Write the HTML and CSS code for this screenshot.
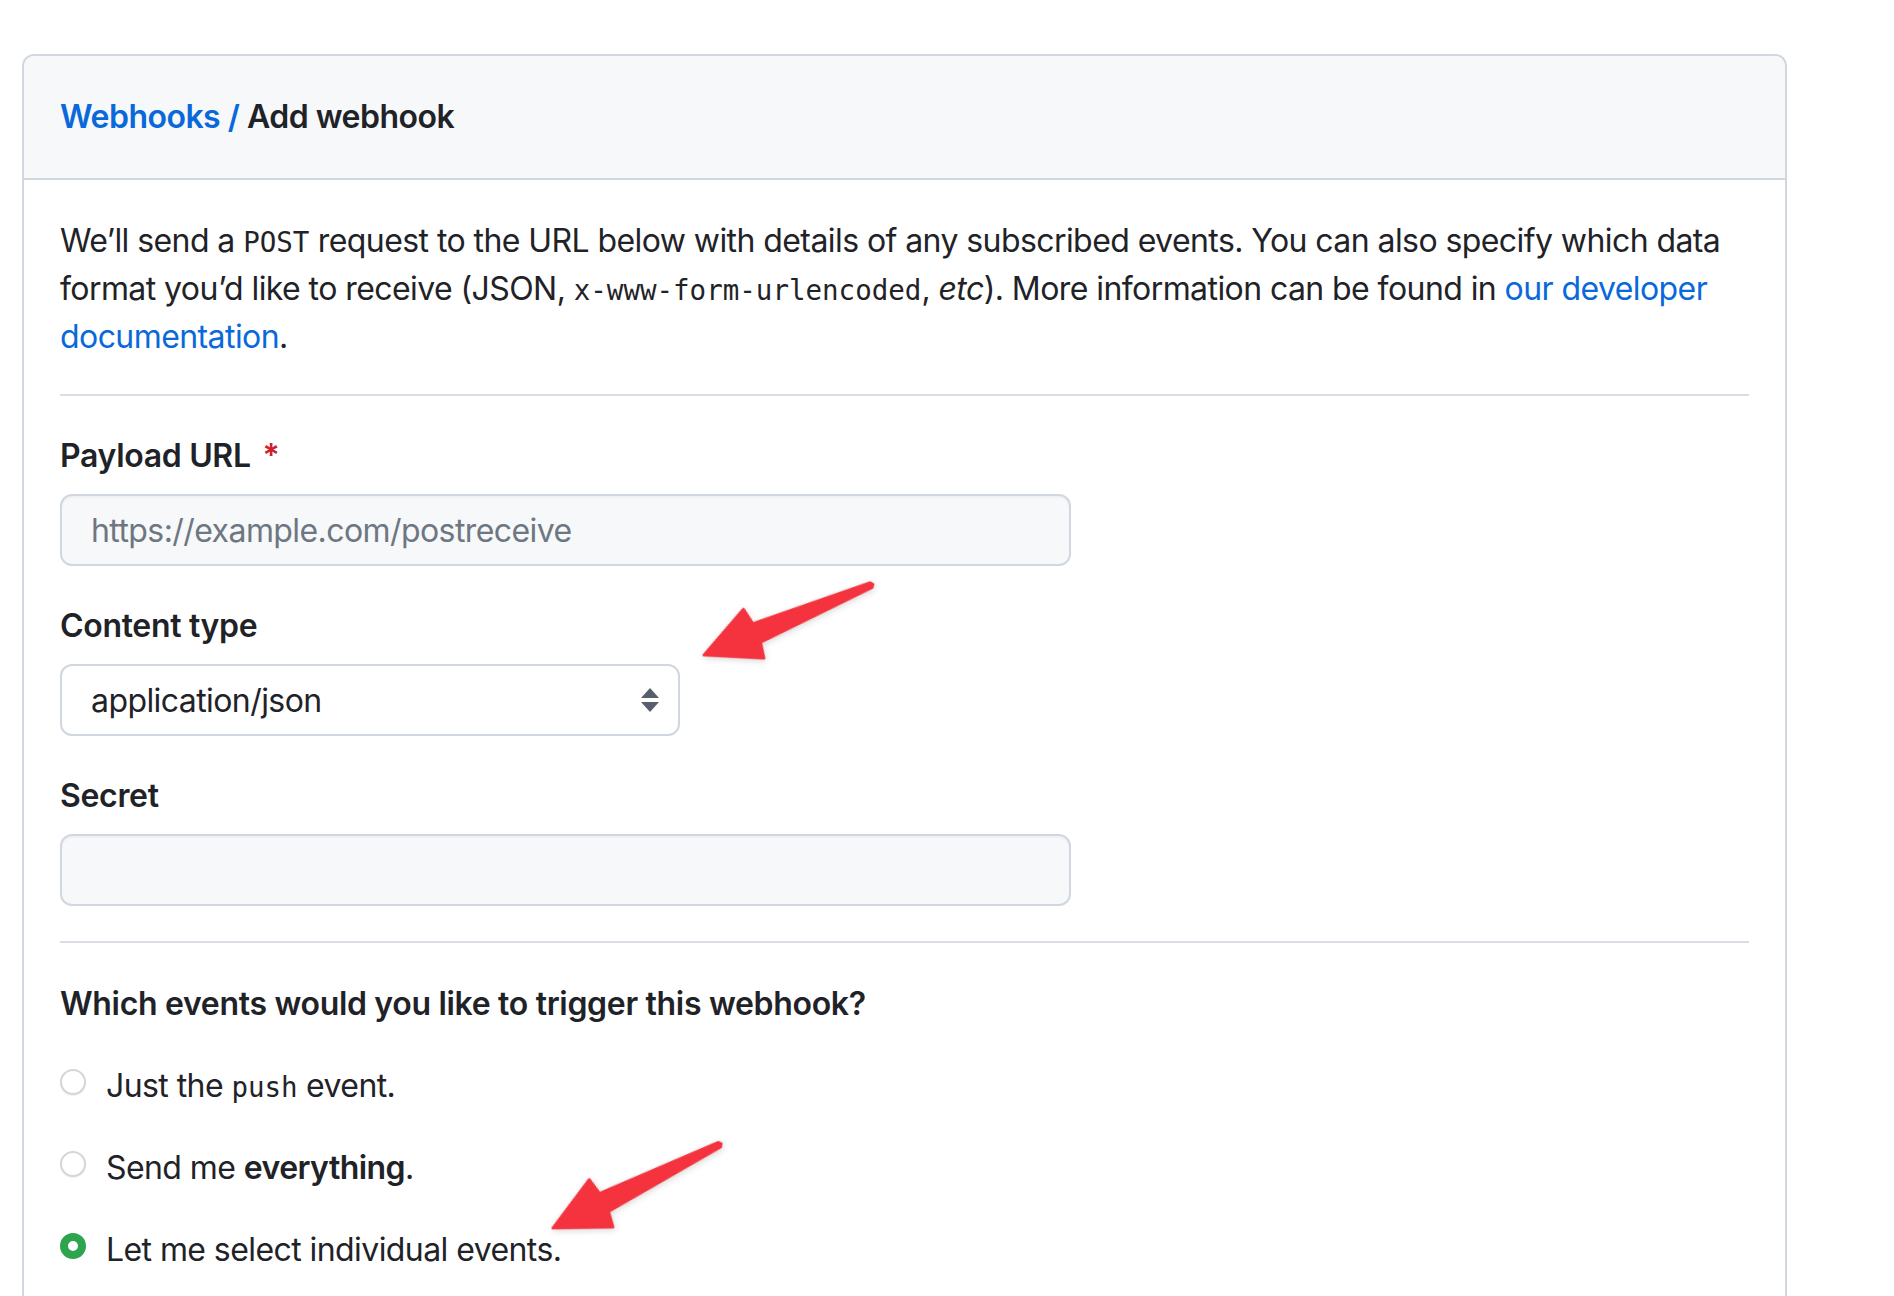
FILE: index.html
```html
<!DOCTYPE html>
<html lang="en">
<head>
<meta charset="utf-8">
<title>Add webhook</title>
<link rel="stylesheet" href="styles.css">
</head>
<body>
<div class="page">
  <div class="box">
    <div class="box-header">
      <h2 class="subhead"><a class="crumb" href="#">Webhooks /</a> Add webhook</h2>
    </div>
    <div class="box-body">
      <p class="intro">We’ll send a <code>POST</code> request to the URL below with details of any subscribed events. You can also specify which data format you’d like to receive (JSON, <code>x-www-form-urlencoded</code>, <em>etc</em>). More information can be found in <a href="#">our developer documentation</a>.</p>
      <hr class="divider">
      <div class="field">
        <label class="label" for="url">Payload URL <span class="req">*</span></label>
        <input class="input wide" id="url" type="text" placeholder="https://example.com/postreceive">
      </div>
      <div class="field">
        <label class="label">Content type</label>
        <div class="select">
          <span>application/json</span>
          <svg class="updown" width="18" height="24" viewBox="0 0 18 24" aria-hidden="true">
            <path d="M9 0 L18 10 L0 10 Z" fill="#57606a"/>
            <path d="M0 14 L18 14 L9 24 Z" fill="#57606a"/>
          </svg>
        </div>
      </div>
      <div class="field last">
        <label class="label" for="secret">Secret</label>
        <input class="input wide" id="secret" type="text">
      </div>
      <hr class="divider second">
      <div class="label events-label">Which events would you like to trigger this webhook?</div>
      <ul class="radios">
        <li class="radio-row"><span class="radio"></span><span>Just the <code>push</code> event.</span></li>
        <li class="radio-row"><span class="radio"></span><span>Send me <strong>everything</strong>.</span></li>
        <li class="radio-row"><span class="radio checked"></span><span>Let me select individual events.</span></li>
      </ul>
    </div>
  </div>
  <svg class="annotations" width="1894" height="1296" viewBox="0 0 1894 1296" aria-hidden="true">
    <g class="arrow" transform="translate(704 655) rotate(-22.7)">
      <polygon points="0,0 54,-27 57,-10 181,-2.5 183,0 181,2.5 57,10 54,26"/>
    </g>
    <g class="arrow" transform="translate(553 1228) rotate(-26.6)">
      <polygon points="0,0 54,-27 57,-10 186,-2.5 188,0 186,2.5 57,10 54,26"/>
    </g>
  </svg>
</div>
</body>
</html>
```
FILE: styles.css
```css
* { box-sizing: border-box; }

body {
  margin: 0;
  background: #ffffff;
  color: #1f2328;
  font-family: Inter, "Liberation Sans", "Noto Sans", sans-serif;
}

.page {
  position: relative;
  padding: 54px 0 0 22px;
  min-height: 1296px;
  overflow: hidden;
}

.box {
  width: 1765px;
  border: 2px solid #d0d7de;
  border-bottom: none;
  border-radius: 12px 12px 0 0;
}

.box-header {
  background: #f6f8fa;
  border-bottom: 2px solid #d0d7de;
  border-radius: 10px 10px 0 0;
  padding: 37px 36px;
}

.subhead {
  margin: 0;
  font-size: 32px;
  line-height: 48px;
  font-weight: 600;
  letter-spacing: -0.016em;
  color: #1f2328;
}

.crumb {
  color: #0969da;
  text-decoration: none;
}

.box-body {
  padding: 37px 36px 200px;
}

.intro {
  margin: 0;
  font-size: 32px;
  line-height: 48px;
  letter-spacing: -0.018em;
}

.intro a {
  color: #0969da;
  text-decoration: none;
}

code {
  font-family: "DejaVu Sans Mono", "Liberation Mono", monospace;
  font-size: 27.5px;
  line-height: 1;
  letter-spacing: 0;
}

.divider {
  border: 0;
  height: 2px;
  background: #d8dee4;
  margin: 33px 0 36px;
}

.divider.second {
  margin: 35px 0 37px;
}

.field {
  margin-bottom: 36px;
}

.field.last {
  margin-bottom: 0;
}

.label {
  display: block;
  font-size: 32px;
  line-height: 48px;
  font-weight: 600;
  letter-spacing: -0.01em;
  margin-bottom: 14px;
}

.req {
  color: #cf222e;
  margin-left: 4px;
}

.input {
  display: block;
  height: 72px;
  border: 2px solid #d0d7de;
  border-radius: 12px;
  background: #f6f8fa;
  padding: 0 29px;
  font-family: inherit;
  font-size: 32px;
  letter-spacing: -0.018em;
  color: #1f2328;
  box-shadow: inset 0 2px 0 rgba(208, 215, 222, 0.2);
  outline: none;
}

.input::placeholder {
  color: #6e7781;
}

.wide {
  width: 1011px;
}

.select {
  width: 620px;
  height: 72px;
  border: 2px solid #d0d7de;
  border-radius: 12px;
  background: #ffffff;
  padding: 0 19px 0 29px;
  font-size: 32px;
  letter-spacing: -0.018em;
  display: flex;
  align-items: center;
  justify-content: space-between;
}

.events-label {
  margin-bottom: 34px;
}

.radios {
  list-style: none;
  margin: 0;
  padding: 0;
  display: flex;
  flex-direction: column;
  gap: 34px;
}

.radio-row {
  display: flex;
  align-items: flex-start;
  gap: 20px;
  font-size: 32px;
  line-height: 48px;
  letter-spacing: -0.018em;
}

.radio-row strong {
  font-weight: 600;
}

.radio {
  flex: none;
  width: 26px;
  height: 26px;
  margin-top: 7px;
  border-radius: 50%;
  border: 2px solid #d3d6da;
  background: #ffffff;
  box-shadow: 0 1px 1px rgba(0, 0, 0, 0.06);
}

.radio.checked {
  border: 8px solid #2da44e;
  background: #ffffff;
  box-shadow: none;
}

.annotations {
  position: absolute;
  top: 0;
  left: 0;
  pointer-events: none;
}

.arrow polygon {
  fill: #f4333f;
  stroke: #f4333f;
  stroke-width: 3;
  stroke-linejoin: round;
  filter: drop-shadow(0 2px 3px rgba(0, 0, 0, 0.15));
}
```
